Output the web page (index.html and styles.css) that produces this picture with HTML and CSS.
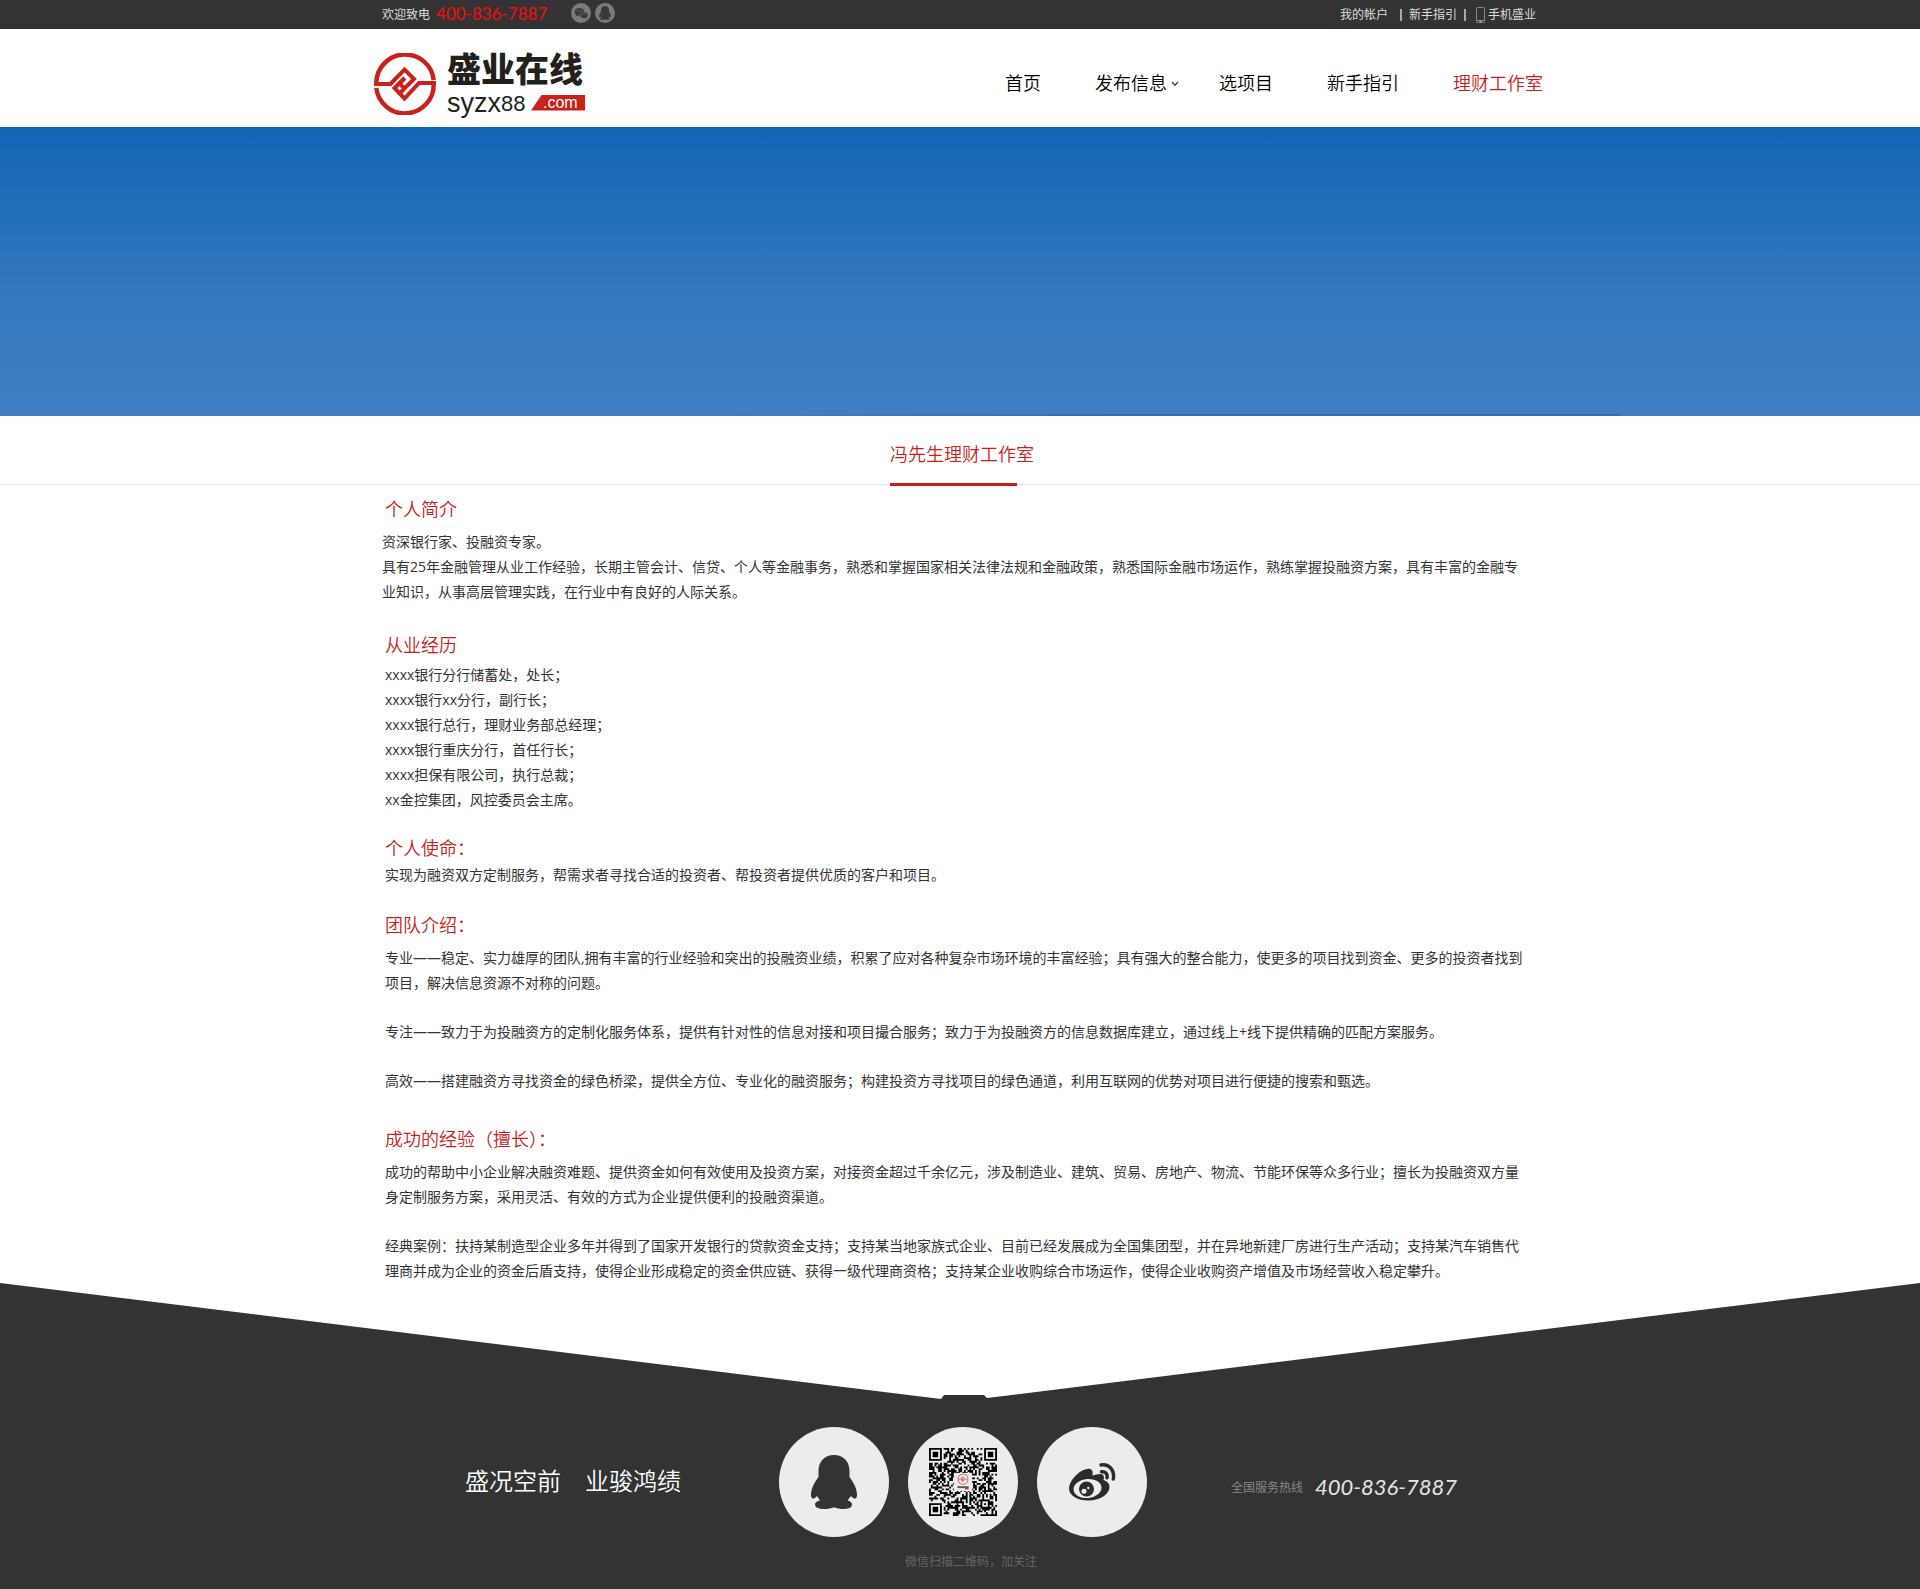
FILE: index.html
```html
<!DOCTYPE html>
<html lang="zh-CN">
<head>
<meta charset="utf-8">
<meta name="viewport" content="width=device-width, initial-scale=1">
<title>盛业在线 - 冯先生理财工作室</title>
<link rel="stylesheet" href="styles.css">
</head>
<body>
<svg class="defs" width="0" height="0" aria-hidden="true">
  <symbol id="qq" viewBox="0 0 46 54">
    <path d="M23 0C13 0 7.500 7 7.500 16v6C3 28 0 34 0 40c0 3 1.500 4 3 3.500 1.200-.5 2-1.500 3-2.500l3 4.500c-3 .5-5 2-5 4 0 3 4 4.500 9 4.500 4 0 7.500-.6 10-1.800C25.500 53.400 29 54 32.500 54c5 0 8.500-1.500 8.500-4.500 0-2-2-3.500-4.500-4l3.500-4.500c1 1 1.800 2 3 2.500 1.500.5 3-.5 3-3.500 0-6-3-12-7.500-18v-6C38.500 7 33 0 23 0z"/>
  </symbol>
  <symbol id="mark" viewBox="0 0 62 62">
    <g fill="none" stroke="currentColor">
      <path stroke-width="4.500" d="M2.300 29.500a28.800 28.800 0 0 1 57.400-2.500M2.300 35a28.800 28.800 0 0 0 57.400-3.500"/>
      <path stroke-width="4" d="M0 31h16.500L30.500 16.500l9.500 9.500-9.500 9.500-5-5 5.500-5.500M62 30H45L30.500 45.500l-10-10.500 9.500-9.500M30.500 35.500l-4.500 4.500"/>
    </g>
  </symbol>
</svg>

<div class="topbar">
  <div class="wrap topbar-inner">
    <span class="welcome">欢迎致电</span>
    <span class="hotline">400-836-7887</span>
    <a class="round" href="#wechat" aria-label="微信">
      <svg viewBox="0 0 20 20"><circle cx="10" cy="10" r="10" fill="#7b7b7b"/><path fill="#3a3a3a" d="M8.500 5C5.800 5 3.700 6.700 3.700 8.900c0 1.200.7 2.300 1.700 3l-.5 1.500 1.800-.9c.6.200 1.200.2 1.800.2.300-2.500 2.300-4 4.800-4C13 6.500 11 5 8.500 5z"/><path fill="#3a3a3a" d="M13 9.200c-2.200 0-3.800 1.300-3.800 3s1.600 3 3.800 3l1.300-.2 1.500.8-.4-1.300c.9-.6 1.400-1.400 1.400-2.300 0-1.700-1.600-3-3.800-3z"/><g fill="#7b7b7b"><circle cx="7" cy="7.800" r=".7"/><circle cx="10" cy="7.800" r=".7"/><circle cx="11.800" cy="11.500" r=".6"/><circle cx="14.300" cy="11.500" r=".6"/></g></svg>
    </a>
    <a class="round" href="#qq-contact" aria-label="QQ">
      <svg viewBox="0 0 20 20"><circle cx="10" cy="10" r="10" fill="#7b7b7b"/><use href="#qq" x="4" y="3" width="12" height="14" fill="#3a3a3a"/></svg>
    </a>
    <nav class="account" aria-label="账户">
      <a href="#account">我的帐户</a><i class="sep"></i><a href="#guide">新手指引</a><i class="sep"></i><a class="mobile" href="#mobile"><svg width="9" height="16" viewBox="0 0 9 16"><rect x=".5" y=".5" width="8" height="15" rx="1" fill="none" stroke="#888"/><path d="M1 13.500h7" stroke="#888"/><path d="M3.500 14.500h2" stroke="#ccc"/></svg>手机盛业</a>
    </nav>
  </div>
</div>

<header class="header">
  <div class="wrap header-inner">
    <a class="logo" href="#home">
      <svg class="logo-mark" aria-hidden="true"><use href="#mark"/></svg>
      <span class="logo-text">
        <b class="logo-name">盛业在线</b>
        <span class="logo-domain">syzx<span class="eights">88</span><span class="com">.com</span></span>
      </span>
    </a>
    <nav class="nav" aria-label="主导航">
      <a href="#home">首页</a>
      <a class="has-menu" href="#publish">发布信息<svg width="8" height="6" viewBox="0 0 8 6"><path d="M1 1l3 3.200L7 1" fill="none" stroke="#444" stroke-width="1.300"/></svg></a>
      <a href="#projects">选项目</a>
      <a href="#guide">新手指引</a>
      <a class="active" href="#studio">理财工作室</a>
    </nav>
  </div>
</header>

<div class="banner"></div>

<div class="tabs"><div class="tabs-inner"><a class="tab" href="#studio">冯先生理财工作室</a></div></div>

<main class="content">
  <section class="profile">
    <h2>个人简介</h2>
    <p>资深银行家、投融资专家。</p>
    <p>具有25年金融管理从业工作经验，长期主管会计、信贷、个人等金融事务，熟悉和掌握国家相关法律法规和金融政策，熟悉国际金融市场运作，熟练掌握投融资方案，具有丰富的金融专业知识，从事高层管理实践，在行业中有良好的人际关系。</p>
  </section>
  <section class="career">
    <h2>从业经历</h2>
    <ul>
      <li>xxxx银行分行储蓄处，处长；</li>
      <li>xxxx银行xx分行，副行长；</li>
      <li>xxxx银行总行，理财业务部总经理；</li>
      <li>xxxx银行重庆分行，首任行长；</li>
      <li>xxxx担保有限公司，执行总裁；</li>
      <li>xx金控集团，风控委员会主席。</li>
    </ul>
  </section>
  <section class="mission">
    <h2>个人使命：</h2>
    <p>实现为融资双方定制服务，帮需求者寻找合适的投资者、帮投资者提供优质的客户和项目。</p>
  </section>
  <section class="spaced team">
    <h2>团队介绍：</h2>
    <p>专业——稳定、实力雄厚的团队,拥有丰富的行业经验和突出的投融资业绩，积累了应对各种复杂市场环境的丰富经验；具有强大的整合能力，使更多的项目找到资金、更多的投资者找到项目，解决信息资源不对称的问题。</p>
    <p>专注——致力于为投融资方的定制化服务体系，提供有针对性的信息对接和项目撮合服务；致力于为投融资方的信息数据库建立，通过线上+线下提供精确的匹配方案服务。</p>
    <p>高效——搭建融资方寻找资金的绿色桥梁，提供全方位、专业化的融资服务；构建投资方寻找项目的绿色通道，利用互联网的优势对项目进行便捷的搜索和甄选。</p>
  </section>
  <section class="spaced success">
    <h2>成功的经验（擅长）：</h2>
    <p>成功的帮助中小企业解决融资难题、提供资金如何有效使用及投资方案，对接资金超过千余亿元，涉及制造业、建筑、贸易、房地产、物流、节能环保等众多行业；擅长为投融资双方量身定制服务方案，采用灵活、有效的方式为企业提供便利的投融资渠道。</p>
    <p>经典案例：扶持某制造型企业多年并得到了国家开发银行的贷款资金支持；支持某当地家族式企业、目前已经发展成为全国集团型，并在异地新建厂房进行生产活动；支持某汽车销售代理商并成为企业的资金后盾支持，使得企业形成稳定的资金供应链、获得一级代理商资格；支持某企业收购综合市场运作，使得企业收购资产增值及市场经营收入稳定攀升。</p>
  </section>
</main>

<footer class="footer">
  <svg class="roof" viewBox="0 0 1920 118" preserveAspectRatio="none" aria-hidden="true"><path fill="#333" d="M0 0L941 116l3-4h40l3 3L1920 0v118H0z"/></svg>
  <div class="footer-main">
    <div class="footer-inner">
      <p class="slogan"><span>盛况空前</span><span>业骏鸿绩</span></p>
      <div class="social">
        <div class="circles">
          <a class="circle" id="qq-contact" href="#qq-contact" aria-label="QQ"><svg width="46" height="54"><use href="#qq" fill="#333"/></svg></a>
          <a class="circle" id="wechat" href="#wechat" aria-label="微信二维码"><svg class="qr" viewBox="0 0 37 37" width="68" height="68"><path id="qr-modules"/><rect x="13.500" y="13.500" width="10" height="10" fill="#ececec"/><use href="#mark" x="15.500" y="14" width="6" height="6" color="#d2322d"/><path d="M15.500 21.300h6" stroke="#555"/><path d="M19.500 22h2" stroke="#d2322d"/></svg></a>
          <a class="circle" href="#weibo" aria-label="微博"><svg width="48" height="38" viewBox="0 0 48 38">
            <path fill="#2b2b2b" d="M17 6.500C10 8.500 1 18 1 25.500 1 33 10 37.500 20 37.500c13 0 21.500-7 21.500-13.500 0-4-3-6-6-7 1-3 .5-6-3.500-6-2.500 0-5 .8-7.500 1.800C25.500 7 23 4.500 17 6.500z"/>
            <ellipse cx="19.500" cy="25.500" rx="14" ry="9.500" fill="#ececec" transform="rotate(-6 19.500 25.500)"/>
            <circle cx="18.500" cy="26" r="7.500" fill="#2b2b2b"/><circle cx="16" cy="28.300" r="2.500" fill="#ececec"/><circle cx="20.300" cy="25" r="1.200" fill="#ececec"/>
            <path fill="none" stroke="#2b2b2b" stroke-width="3.400" stroke-linecap="round" d="M33 2c8-1.500 14 5 12.300 14M33.500 8.800c4-.6 6.300 2.200 5.500 6"/>
          </svg></a>
        </div>
        <p class="caption">微信扫描二维码，加关注</p>
      </div>
      <p class="service"><span>全国服务热线</span><em>400-836-7887</em></p>
    </div>
  </div>
</footer>
<script src="qr.js"></script>
</body>
</html>
```

FILE: styles.css
```css
* { box-sizing: border-box; }
body {
  margin: 0;
  background: #fff;
  color: #333;
  font: 400 14px/25px "Open Sans", "Noto Sans CJK SC", sans-serif;
}
a { color: inherit; text-decoration: none; }
p, h2, ul { margin: 0; padding: 0; }
svg { display: block; }
.defs { position: absolute; }
.wrap { max-width: 1172px; margin: 0 auto; }

.topbar { background: #333; color: #ddd; font-size: 12px; line-height: 28px; }
.topbar-inner { display: flex; align-items: center; height: 29px; padding: 0 10px 0 8px; }
.hotline { margin: 0 24px 2px 6px; color: #f80c0c; font-family: Lato, sans-serif; font-size: 17px; line-height: 26px; }
.round { width: 20px; margin: 0 4px 3px 0; }
.account { display: flex; align-items: center; margin-left: auto; }
.sep { width: 2px; height: 12px; margin: 0 7px; background: #aaa; }
.sep:first-of-type { margin-left: 12px; }
.mobile { display: flex; align-items: center; gap: 3px; margin-left: 3px; }

.header-inner { display: flex; align-items: center; justify-content: space-between; height: 98px; padding-right: 3px; }
.logo { display: flex; align-items: center; gap: 11px; padding-top: 16px; color: #221f1c; }
.logo-mark { width: 62px; height: 62px; margin-bottom: 4px; color: #c9211b; }
.logo-text { display: flex; flex-direction: column; width: 138px; margin-bottom: 7px; }
.logo-name { font-size: 34px; font-weight: 900; line-height: 40px; }
.logo-domain { display: flex; align-items: center; font: 27px/24px "Liberation Sans", sans-serif; }
.eights { padding-top: 3px; font-size: 22px; }
.com { width: 54px; height: 16px; margin-left: auto; padding-left: 12px; background: #c9211b; clip-path: polygon(20% 0, 100% 0, 100% 100%, 0 100%); color: #fff; font-size: 16px; line-height: 15px; }
.nav { display: flex; padding-top: 11px; gap: 54px; color: #000; font-size: 18px; font-weight: 350; }
.has-menu { display: flex; align-items: center; gap: 4px; margin-right: -14px; }
.nav .active { color: #c9211b; }

.banner {
  height: 289px;
  background:
    linear-gradient(to right, transparent 36%, #2f6cb8 60%, #2f6cb8 84.400%, transparent 84.400%) bottom / 100% 2px no-repeat,
    linear-gradient(#1265b3, #3277bf 55%, #3f80c4);
}

.tabs { height: 69px; border-bottom: 1px solid #e5e5e5; margin-bottom: 10px; }
.tabs-inner { display: flex; width: 140px; height: 70px; margin: 0 auto; }
.tab { position: relative; color: #c9211b; font-size: 18px; font-weight: 350; line-height: 77px; white-space: nowrap; }
.tab::after { content: ""; position: absolute; left: 0; bottom: 0; width: 127px; height: 3px; background: #c2201a; }

.content { max-width: 1156px; margin: 0 auto; padding: 0 10px 0 3px; }
.content h2 { margin-bottom: 6px; color: #c9211b; font-size: 18px; font-weight: 350; line-height: 28px; }
.content section { margin-bottom: 24px; }
.content ul { list-style: none; }
.content .profile { margin-bottom: 27px; }
.profile p { margin-left: -3px; }
.content .career h2 { margin-bottom: 3px; }
.content .career { margin-bottom: 22px; }
.content .mission h2 { margin-bottom: 0; }
.content .team { margin-bottom: 32px; }
.content .success { margin-bottom: 0; }
.spaced p + p { margin-top: 24px; }

.footer { color: #fff; }
.roof { width: 100%; height: 118px; }
.footer-main { background: #333; }
.footer-inner {
  display: grid;
  grid-template-columns: 1fr 368px 1fr;
  max-width: 1160px;
  margin: 0 auto;
  padding: 26px 0 17px 6px;
}
.slogan { display: flex; justify-content: flex-end; gap: 24px; margin-right: 98px; font-size: 24px; font-weight: 350; line-height: 108px; white-space: nowrap; }
.circles { display: flex; justify-content: space-between; }
.circle { display: flex; align-items: center; justify-content: center; width: 110px; height: 110px; border-radius: 50%; background: #ececec; }
.caption { margin-top: 15px; padding-left: 16px; color: #666; font-size: 12px; line-height: 20px; text-align: center; }
.service { display: flex; align-items: center; gap: 12px; height: 118px; margin-left: 84px; white-space: nowrap; }
.service span { padding-top: 3px; color: #888; font-size: 12px; }
.service em { color: #e6e6e6; font-family: Lato, sans-serif; font-size: 22px; }
```

FILE: qr.js
```js
// Draws the 37 x 37 modules of the follow-us code.
const size = 37;
const finders = [[0, 0], [30, 0], [0, 30]];
let seed = 88;
let d = "";
function random() {
  seed = (seed * 1103515245 + 12345) % 2147483648;
  return seed / 2147483648;
}
function dark(x, y) {
  for (const [fx, fy] of finders) {
    const dx = x - fx, dy = y - fy;
    if (dx >= -1 && dx <= 7 && dy >= -1 && dy <= 7) {
      const ring = Math.max(Math.abs(dx - 3), Math.abs(dy - 3));
      return ring === 3 || ring < 2;
    }
  }
  const ring = Math.max(Math.abs(x - 30), Math.abs(y - 30));
  if (ring <= 2) return ring !== 1;
  return random() < 0.52;
}
for (let y = 0; y < size; y++) {
  for (let x = 0; x < size; x++) {
    if (dark(x, y)) d += `M${x} ${y}h1v1h-1z`;
  }
}
document.getElementById("qr-modules").setAttribute("d", d);
```
